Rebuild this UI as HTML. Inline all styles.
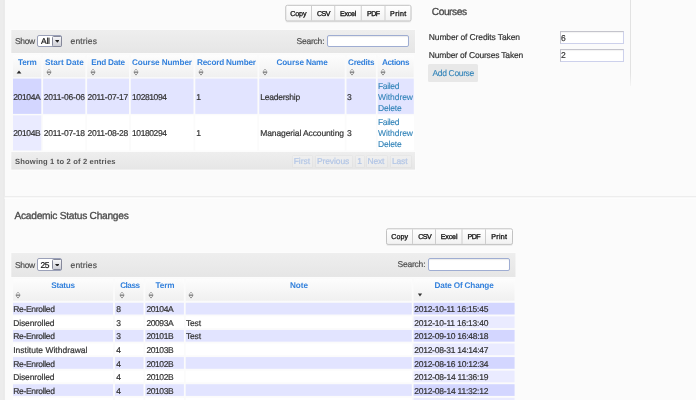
<!DOCTYPE html><html lang="en"><head><meta charset="utf-8"><title>Student Record</title><style>
html,body{margin:0;padding:0}body{width:696px;height:400px;overflow:hidden;position:relative;background:#fbfbfb;font-family:"Liberation Sans",sans-serif;color:#333;text-rendering:geometricPrecision;-webkit-font-smoothing:antialiased}
.b{display:inline-block;width:0;height:0}.r{position:absolute}.t{position:absolute;white-space:nowrap;height:14px;line-height:14px;-webkit-text-stroke:0.2px}
#L{position:absolute;left:0;top:0;width:696px;height:400px;will-change:transform;transform:translateZ(0)}
</style></head><body><div id="L">
<svg class="r" style="left:0;top:0" width="696" height="400" viewBox="0 0 696 400"><defs><linearGradient id="gh" x1="0" y1="0" x2="0" y2="1"><stop offset="0" stop-color="#fdfdfd"/><stop offset="1" stop-color="#f0f0f0"/></linearGradient><linearGradient id="gt" x1="0" y1="0" x2="0" y2="1"><stop offset="0" stop-color="#eeeeee"/><stop offset="1" stop-color="#e6e6e6"/></linearGradient><linearGradient id="gb" x1="0" y1="0" x2="0" y2="1"><stop offset="0" stop-color="#ffffff"/><stop offset="1" stop-color="#f2f2f2"/></linearGradient></defs><rect x="0.00" y="0.00" width="4.50" height="400.00" fill="#ececec"/><rect x="3.70" y="0.00" width="0.90" height="400.00" fill="#e4e4e4"/><rect x="4.50" y="196.10" width="691.50" height="1.40" fill="#ebebeb"/><rect x="4.50" y="197.50" width="691.50" height="1.40" fill="#fdfdfd"/><rect x="10.30" y="29.00" width="405.70" height="25.00" fill="#fcfcfc"/><rect x="11.30" y="30.00" width="403.70" height="23.00" fill="url(#gt)"/><rect x="10.30" y="252.00" width="506.20" height="26.00" fill="#fcfcfc"/><rect x="11.30" y="253.00" width="504.20" height="24.00" fill="url(#gt)"/><rect x="13.00" y="55.30" width="28.30" height="21.90" fill="url(#gh)"/><rect x="43.10" y="55.30" width="42.20" height="21.90" fill="url(#gh)"/><rect x="87.10" y="55.30" width="41.90" height="21.90" fill="url(#gh)"/><rect x="130.80" y="55.30" width="62.70" height="21.90" fill="url(#gh)"/><rect x="195.30" y="55.30" width="62.10" height="21.90" fill="url(#gh)"/><rect x="259.20" y="55.30" width="85.50" height="21.90" fill="url(#gh)"/><rect x="346.50" y="55.30" width="29.40" height="21.90" fill="url(#gh)"/><rect x="377.70" y="55.30" width="36.10" height="21.90" fill="url(#gh)"/><rect x="13.00" y="78.60" width="28.30" height="35.30" fill="#d3d6ff"/><rect x="43.10" y="78.60" width="42.20" height="35.30" fill="#e2e4ff"/><rect x="87.10" y="78.60" width="41.90" height="35.30" fill="#e2e4ff"/><rect x="130.80" y="78.60" width="62.70" height="35.30" fill="#e2e4ff"/><rect x="195.30" y="78.60" width="62.10" height="35.30" fill="#e2e4ff"/><rect x="259.20" y="78.60" width="85.50" height="35.30" fill="#e2e4ff"/><rect x="346.50" y="78.60" width="29.40" height="35.30" fill="#e2e4ff"/><rect x="377.70" y="78.60" width="36.10" height="35.30" fill="#e2e4ff"/><rect x="13.00" y="115.30" width="28.30" height="35.20" fill="#eaebff"/><rect x="43.10" y="115.30" width="42.20" height="35.20" fill="#ffffff"/><rect x="87.10" y="115.30" width="41.90" height="35.20" fill="#ffffff"/><rect x="130.80" y="115.30" width="62.70" height="35.20" fill="#ffffff"/><rect x="195.30" y="115.30" width="62.10" height="35.20" fill="#ffffff"/><rect x="259.20" y="115.30" width="85.50" height="35.20" fill="#ffffff"/><rect x="346.50" y="115.30" width="29.40" height="35.20" fill="#ffffff"/><rect x="377.70" y="115.30" width="36.10" height="35.20" fill="#ffffff"/><rect x="10.30" y="151.00" width="405.70" height="19.60" fill="#fcfcfc"/><rect x="11.30" y="152.00" width="403.70" height="17.60" fill="url(#gt)"/><rect x="13.00" y="278.90" width="100.10" height="21.80" fill="url(#gh)"/><rect x="114.90" y="278.90" width="28.60" height="21.80" fill="url(#gh)"/><rect x="145.30" y="278.90" width="38.60" height="21.80" fill="url(#gh)"/><rect x="185.70" y="278.90" width="226.10" height="21.80" fill="url(#gh)"/><rect x="413.60" y="278.90" width="101.00" height="21.80" fill="url(#gh)"/><rect x="13.00" y="302.80" width="100.10" height="11.70" fill="#e2e4ff"/><rect x="114.90" y="302.80" width="28.60" height="11.70" fill="#e2e4ff"/><rect x="145.30" y="302.80" width="38.60" height="11.70" fill="#e2e4ff"/><rect x="185.70" y="302.80" width="226.10" height="11.70" fill="#e2e4ff"/><rect x="413.60" y="302.80" width="101.00" height="11.70" fill="#d3d6ff"/><rect x="13.00" y="316.37" width="100.10" height="11.70" fill="#ffffff"/><rect x="114.90" y="316.37" width="28.60" height="11.70" fill="#ffffff"/><rect x="145.30" y="316.37" width="38.60" height="11.70" fill="#ffffff"/><rect x="185.70" y="316.37" width="226.10" height="11.70" fill="#ffffff"/><rect x="413.60" y="316.37" width="101.00" height="11.70" fill="#eaebff"/><rect x="13.00" y="329.94" width="100.10" height="11.70" fill="#e2e4ff"/><rect x="114.90" y="329.94" width="28.60" height="11.70" fill="#e2e4ff"/><rect x="145.30" y="329.94" width="38.60" height="11.70" fill="#e2e4ff"/><rect x="185.70" y="329.94" width="226.10" height="11.70" fill="#e2e4ff"/><rect x="413.60" y="329.94" width="101.00" height="11.70" fill="#d3d6ff"/><rect x="13.00" y="343.51" width="100.10" height="11.70" fill="#ffffff"/><rect x="114.90" y="343.51" width="28.60" height="11.70" fill="#ffffff"/><rect x="145.30" y="343.51" width="38.60" height="11.70" fill="#ffffff"/><rect x="185.70" y="343.51" width="226.10" height="11.70" fill="#ffffff"/><rect x="413.60" y="343.51" width="101.00" height="11.70" fill="#eaebff"/><rect x="13.00" y="357.08" width="100.10" height="11.70" fill="#e2e4ff"/><rect x="114.90" y="357.08" width="28.60" height="11.70" fill="#e2e4ff"/><rect x="145.30" y="357.08" width="38.60" height="11.70" fill="#e2e4ff"/><rect x="185.70" y="357.08" width="226.10" height="11.70" fill="#e2e4ff"/><rect x="413.60" y="357.08" width="101.00" height="11.70" fill="#d3d6ff"/><rect x="13.00" y="370.65" width="100.10" height="11.70" fill="#ffffff"/><rect x="114.90" y="370.65" width="28.60" height="11.70" fill="#ffffff"/><rect x="145.30" y="370.65" width="38.60" height="11.70" fill="#ffffff"/><rect x="185.70" y="370.65" width="226.10" height="11.70" fill="#ffffff"/><rect x="413.60" y="370.65" width="101.00" height="11.70" fill="#eaebff"/><rect x="13.00" y="384.22" width="100.10" height="11.70" fill="#e2e4ff"/><rect x="114.90" y="384.22" width="28.60" height="11.70" fill="#e2e4ff"/><rect x="145.30" y="384.22" width="38.60" height="11.70" fill="#e2e4ff"/><rect x="185.70" y="384.22" width="226.10" height="11.70" fill="#e2e4ff"/><rect x="413.60" y="384.22" width="101.00" height="11.70" fill="#d3d6ff"/><rect x="13.00" y="397.79" width="100.10" height="2.21" fill="#ffffff"/><rect x="114.90" y="397.79" width="28.60" height="2.21" fill="#ffffff"/><rect x="145.30" y="397.79" width="38.60" height="2.21" fill="#ffffff"/><rect x="185.70" y="397.79" width="226.10" height="2.21" fill="#ffffff"/><rect x="413.60" y="397.79" width="101.00" height="2.21" fill="#eaebff"/><rect x="285.55" y="5.80" width="125.65" height="16.70" rx="1.6" fill="#ececec"/><rect x="285.75" y="5.30" width="125.25" height="15.70" rx="1.6" fill="url(#gb)" stroke="#c2c2c2" stroke-width="1"/><rect x="311.00" y="5.80" width="1" height="14.70" fill="#cdcdcd"/><rect x="334.25" y="5.80" width="1" height="14.70" fill="#cdcdcd"/><rect x="360.75" y="5.80" width="1" height="14.70" fill="#cdcdcd"/><rect x="384.50" y="5.80" width="1" height="14.70" fill="#cdcdcd"/><rect x="386.30" y="229.30" width="126.40" height="16.60" rx="1.6" fill="#ececec"/><rect x="386.50" y="228.80" width="126.00" height="15.60" rx="1.6" fill="url(#gb)" stroke="#c2c2c2" stroke-width="1"/><rect x="412.00" y="229.30" width="1" height="14.60" fill="#cdcdcd"/><rect x="435.00" y="229.30" width="1" height="14.60" fill="#cdcdcd"/><rect x="461.50" y="229.30" width="1" height="14.60" fill="#cdcdcd"/><rect x="485.00" y="229.30" width="1" height="14.60" fill="#cdcdcd"/></svg>
<div class="r" style="left:629.80px;top:0.00px;width:1.00px;height:86.00px;background:linear-gradient(#e2e2e2 0,#e2e2e2 85%,#f4f4f4 100%)"></div>
<div class="r" style="left:37.40px;top:34.90px;width:25.10px;height:12.20px;background:#fff;border:1px solid #9aa0b8;border-radius:2px;box-sizing:border-box"></div>
<div class="r" style="left:52.40px;top:35.50px;width:9.60px;height:11.10px;background:linear-gradient(#f6f6f8,#cdced6);border:1px solid #85889a;border-radius:1.5px;box-sizing:border-box"></div>
<div class="r" style="left:327.00px;top:34.70px;width:82.00px;height:12.50px;background:#fff;border:1px solid #9fadd2;border-radius:2px;box-sizing:border-box;box-shadow:inset 0 1px 1px rgba(0,0,0,.08)"></div>
<div class="r" style="left:37.40px;top:258.40px;width:25.10px;height:12.20px;background:#fff;border:1px solid #9aa0b8;border-radius:2px;box-sizing:border-box"></div>
<div class="r" style="left:52.40px;top:259.00px;width:9.60px;height:11.10px;background:linear-gradient(#f6f6f8,#cdced6);border:1px solid #85889a;border-radius:1.5px;box-sizing:border-box"></div>
<div class="r" style="left:427.50px;top:258.20px;width:82.00px;height:12.50px;background:#fff;border:1px solid #9fadd2;border-radius:2px;box-sizing:border-box;box-shadow:inset 0 1px 1px rgba(0,0,0,.08)"></div>
<div class="r" style="left:291.50px;top:155.00px;width:21.50px;height:12.50px;background:rgba(255,255,255,.18);border:1px solid rgba(0,0,0,.035);box-sizing:border-box;border-radius:1.5px"></div>
<div class="r" style="left:314.50px;top:155.00px;width:38.50px;height:12.50px;background:rgba(255,255,255,.18);border:1px solid rgba(0,0,0,.035);box-sizing:border-box;border-radius:1.5px"></div>
<div class="r" style="left:354.50px;top:155.00px;width:10.00px;height:12.50px;background:rgba(255,255,255,.18);border:1px solid rgba(0,0,0,.035);box-sizing:border-box;border-radius:1.5px"></div>
<div class="r" style="left:366.00px;top:155.00px;width:22.00px;height:12.50px;background:rgba(255,255,255,.18);border:1px solid rgba(0,0,0,.035);box-sizing:border-box;border-radius:1.5px"></div>
<div class="r" style="left:389.50px;top:155.00px;width:22.00px;height:12.50px;background:rgba(255,255,255,.18);border:1px solid rgba(0,0,0,.035);box-sizing:border-box;border-radius:1.5px"></div>
<div class="r" style="left:559.60px;top:31.30px;width:64.90px;height:12.50px;background:#fff;border:1px solid;border-color:#c4c4cc #cdd1ec #cdd1ec #c4c4cc;box-sizing:border-box;box-shadow:inset 0 1px 1px rgba(0,0,0,.05)"></div>
<div class="r" style="left:559.60px;top:48.60px;width:64.90px;height:13.20px;background:#fff;border:1px solid;border-color:#c4c4cc #cdd1ec #cdd1ec #c4c4cc;box-sizing:border-box;box-shadow:inset 0 1px 1px rgba(0,0,0,.05)"></div>
<div class="r" style="left:428.25px;top:63.75px;width:50.00px;height:18.00px;background:#e8e8e8;border-radius:1.5px"></div>
<svg style="position:absolute;left:54.6px;top:40.099999999999994px" width="4.6" height="2.8" viewBox="0 0 46 28"><path d="M0 0H46L23 28Z" fill="#222"/></svg>
<svg style="position:absolute;left:54.6px;top:263.6px" width="4.6" height="2.8" viewBox="0 0 46 28"><path d="M0 0H46L23 28Z" fill="#222"/></svg>
<svg style="position:absolute;left:15.50px;top:70.00px" width="6" height="4" viewBox="0 0 60 40"><path d="M30 4L54 36H6Z" fill="#262626"/></svg>
<svg style="position:absolute;left:45.55px;top:67.70px" width="6" height="8" viewBox="0 0 60 80"><path d="M30 10L50 36H10Z" fill="#ffffff" stroke="#4a4a4a" stroke-width="4.2" stroke-linejoin="miter"/><path d="M30 71L50 45H10Z" fill="#ffffff" stroke="#1c1c1c" stroke-width="4.6" stroke-linejoin="miter"/></svg>
<svg style="position:absolute;left:89.80px;top:67.70px" width="6" height="8" viewBox="0 0 60 80"><path d="M30 10L50 36H10Z" fill="#ffffff" stroke="#4a4a4a" stroke-width="4.2" stroke-linejoin="miter"/><path d="M30 71L50 45H10Z" fill="#ffffff" stroke="#1c1c1c" stroke-width="4.6" stroke-linejoin="miter"/></svg>
<svg style="position:absolute;left:133.30px;top:67.70px" width="6" height="8" viewBox="0 0 60 80"><path d="M30 10L50 36H10Z" fill="#ffffff" stroke="#4a4a4a" stroke-width="4.2" stroke-linejoin="miter"/><path d="M30 71L50 45H10Z" fill="#ffffff" stroke="#1c1c1c" stroke-width="4.6" stroke-linejoin="miter"/></svg>
<svg style="position:absolute;left:197.80px;top:67.70px" width="6" height="8" viewBox="0 0 60 80"><path d="M30 10L50 36H10Z" fill="#ffffff" stroke="#4a4a4a" stroke-width="4.2" stroke-linejoin="miter"/><path d="M30 71L50 45H10Z" fill="#ffffff" stroke="#1c1c1c" stroke-width="4.6" stroke-linejoin="miter"/></svg>
<svg style="position:absolute;left:262.05px;top:67.70px" width="6" height="8" viewBox="0 0 60 80"><path d="M30 10L50 36H10Z" fill="#ffffff" stroke="#4a4a4a" stroke-width="4.2" stroke-linejoin="miter"/><path d="M30 71L50 45H10Z" fill="#ffffff" stroke="#1c1c1c" stroke-width="4.6" stroke-linejoin="miter"/></svg>
<svg style="position:absolute;left:348.80px;top:67.70px" width="6" height="8" viewBox="0 0 60 80"><path d="M30 10L50 36H10Z" fill="#ffffff" stroke="#4a4a4a" stroke-width="4.2" stroke-linejoin="miter"/><path d="M30 71L50 45H10Z" fill="#ffffff" stroke="#1c1c1c" stroke-width="4.6" stroke-linejoin="miter"/></svg>
<svg style="position:absolute;left:380.05px;top:67.70px" width="6" height="8" viewBox="0 0 60 80"><path d="M30 10L50 36H10Z" fill="#ffffff" stroke="#4a4a4a" stroke-width="4.2" stroke-linejoin="miter"/><path d="M30 71L50 45H10Z" fill="#ffffff" stroke="#1c1c1c" stroke-width="4.6" stroke-linejoin="miter"/></svg>
<svg style="position:absolute;left:14.80px;top:290.70px" width="6" height="8" viewBox="0 0 60 80"><path d="M30 10L50 36H10Z" fill="#ffffff" stroke="#4a4a4a" stroke-width="4.2" stroke-linejoin="miter"/><path d="M30 71L50 45H10Z" fill="#ffffff" stroke="#1c1c1c" stroke-width="4.6" stroke-linejoin="miter"/></svg>
<svg style="position:absolute;left:118.55px;top:290.70px" width="6" height="8" viewBox="0 0 60 80"><path d="M30 10L50 36H10Z" fill="#ffffff" stroke="#4a4a4a" stroke-width="4.2" stroke-linejoin="miter"/><path d="M30 71L50 45H10Z" fill="#ffffff" stroke="#1c1c1c" stroke-width="4.6" stroke-linejoin="miter"/></svg>
<svg style="position:absolute;left:148.05px;top:290.70px" width="6" height="8" viewBox="0 0 60 80"><path d="M30 10L50 36H10Z" fill="#ffffff" stroke="#4a4a4a" stroke-width="4.2" stroke-linejoin="miter"/><path d="M30 71L50 45H10Z" fill="#ffffff" stroke="#1c1c1c" stroke-width="4.6" stroke-linejoin="miter"/></svg>
<svg style="position:absolute;left:188.30px;top:290.70px" width="6" height="8" viewBox="0 0 60 80"><path d="M30 10L50 36H10Z" fill="#ffffff" stroke="#4a4a4a" stroke-width="4.2" stroke-linejoin="miter"/><path d="M30 71L50 45H10Z" fill="#ffffff" stroke="#1c1c1c" stroke-width="4.6" stroke-linejoin="miter"/></svg>
<svg style="position:absolute;left:416.70px;top:293.30px" width="6" height="4" viewBox="0 0 60 40"><path d="M9 6H51L30 34Z" fill="#333"/></svg>
<span class="t" id="t0" style="left:290.25px;top:7.00px;font-size:7.1px;color:#111;letter-spacing:-0.104px;-webkit-text-stroke:0.3px #111;">Copy</span>
<span class="t" id="t1" style="left:317.00px;top:7.00px;font-size:7.1px;color:#111;letter-spacing:-0.550px;-webkit-text-stroke:0.3px #111;">CSV</span>
<span class="t" id="t2" style="left:340.00px;top:7.00px;font-size:7.1px;color:#111;letter-spacing:-0.277px;-webkit-text-stroke:0.3px #111;">Excel</span>
<span class="t" id="t3" style="left:367.00px;top:7.00px;font-size:7.1px;color:#111;letter-spacing:-0.550px;-webkit-text-stroke:0.3px #111;">PDF</span>
<span class="t" id="t4" style="left:390.00px;top:7.00px;font-size:7.1px;color:#111;letter-spacing:0.414px;-webkit-text-stroke:0.3px #111;">Print</span>
<span class="t" id="t5" style="left:391.25px;top:230.00px;font-size:7.1px;color:#111;letter-spacing:0.062px;-webkit-text-stroke:0.3px #111;">Copy</span>
<span class="t" id="t6" style="left:418.25px;top:230.00px;font-size:7.1px;color:#111;letter-spacing:-0.550px;-webkit-text-stroke:0.3px #111;">CSV</span>
<span class="t" id="t7" style="left:440.75px;top:230.00px;font-size:7.1px;color:#111;letter-spacing:-0.152px;-webkit-text-stroke:0.3px #111;">Excel</span>
<span class="t" id="t8" style="left:467.50px;top:230.00px;font-size:7.1px;color:#111;letter-spacing:-0.550px;-webkit-text-stroke:0.3px #111;">PDF</span>
<span class="t" id="t9" style="left:491.25px;top:230.00px;font-size:7.1px;color:#111;letter-spacing:0.289px;-webkit-text-stroke:0.3px #111;">Print</span>
<span class="t" id="t10" style="left:15.00px;top:34.00px;font-size:8.5px;color:#505050;letter-spacing:-0.355px;">Show</span>
<span class="t" id="t11" style="left:41.00px;top:34.00px;font-size:8.5px;color:#111;letter-spacing:-0.227px;">All</span>
<span class="t" id="t12" style="left:70.50px;top:34.00px;font-size:8.5px;color:#505050;letter-spacing:0.164px;">entries</span>
<span class="t" id="t13" style="left:296.50px;top:34.00px;font-size:8.5px;color:#505050;letter-spacing:-0.216px;">Search:</span>
<span class="t" id="t14" style="left:15.00px;top:258.00px;font-size:8.5px;color:#505050;letter-spacing:-0.355px;">Show</span>
<span class="t" id="t15" style="left:40.50px;top:258.00px;font-size:8.5px;color:#111;letter-spacing:-0.550px;">25</span>
<span class="t" id="t16" style="left:70.50px;top:258.00px;font-size:8.5px;color:#505050;letter-spacing:0.164px;">entries</span>
<span class="t" id="t17" style="left:397.50px;top:257.00px;font-size:8.5px;color:#505050;letter-spacing:-0.216px;">Search:</span>
<span class="t" id="t18" style="left:18.00px;top:56.00px;font-size:8.2px;color:#3582dc;font-weight:700;letter-spacing:-0.224px;-webkit-text-stroke:0;">Term</span>
<span class="t" id="t19" style="left:45.00px;top:56.00px;font-size:8.2px;color:#3582dc;font-weight:700;letter-spacing:0.007px;-webkit-text-stroke:0;">Start Date</span>
<span class="t" id="t20" style="left:91.25px;top:56.00px;font-size:8.2px;color:#3582dc;font-weight:700;letter-spacing:-0.250px;-webkit-text-stroke:0;">End Date</span>
<span class="t" id="t21" style="left:132.00px;top:56.00px;font-size:8.2px;color:#3582dc;font-weight:700;letter-spacing:-0.118px;-webkit-text-stroke:0;">Course Number</span>
<span class="t" id="t22" style="left:197.00px;top:56.00px;font-size:8.2px;color:#3582dc;font-weight:700;letter-spacing:-0.202px;-webkit-text-stroke:0;">Record Number</span>
<span class="t" id="t23" style="left:276.50px;top:56.00px;font-size:8.2px;color:#3582dc;font-weight:700;letter-spacing:-0.155px;-webkit-text-stroke:0;">Course Name</span>
<span class="t" id="t24" style="left:348.00px;top:56.00px;font-size:8.2px;color:#3582dc;font-weight:700;letter-spacing:-0.286px;-webkit-text-stroke:0;">Credits</span>
<span class="t" id="t25" style="left:382.00px;top:56.00px;font-size:8.2px;color:#3582dc;font-weight:700;letter-spacing:-0.422px;-webkit-text-stroke:0;">Actions</span>
<span class="t" id="t26" style="left:13.20px;top:90.00px;font-size:8.5px;color:#333;letter-spacing:-0.352px;">20104A</span>
<span class="t" id="t27" style="left:43.75px;top:90.00px;font-size:8.5px;color:#333;letter-spacing:-0.179px;">2011-06-06</span>
<span class="t" id="t28" style="left:87.50px;top:90.00px;font-size:8.5px;color:#333;letter-spacing:-0.234px;">2011-07-17</span>
<span class="t" id="t29" style="left:132.00px;top:90.00px;font-size:8.5px;color:#333;letter-spacing:-0.404px;">10281094</span>
<span class="t" id="t30" style="left:196.20px;top:90.00px;font-size:8.5px;color:#333;">1</span>
<span class="t" id="t31" style="left:260.25px;top:90.00px;font-size:8.5px;color:#333;letter-spacing:-0.229px;">Leadership</span>
<span class="t" id="t32" style="left:347.00px;top:90.00px;font-size:8.5px;color:#333;">3</span>
<span class="t" id="t33" style="left:13.20px;top:126.00px;font-size:8.5px;color:#333;letter-spacing:-0.352px;">20104B</span>
<span class="t" id="t34" style="left:43.75px;top:126.00px;font-size:8.5px;color:#333;letter-spacing:-0.179px;">2011-07-18</span>
<span class="t" id="t35" style="left:87.50px;top:126.00px;font-size:8.5px;color:#333;letter-spacing:-0.234px;">2011-08-28</span>
<span class="t" id="t36" style="left:132.00px;top:126.00px;font-size:8.5px;color:#333;letter-spacing:-0.404px;">10180294</span>
<span class="t" id="t37" style="left:196.20px;top:126.00px;font-size:8.5px;color:#333;">1</span>
<span class="t" id="t38" style="left:260.25px;top:126.00px;font-size:8.5px;color:#333;letter-spacing:-0.113px;">Managerial Accounting</span>
<span class="t" id="t39" style="left:347.00px;top:126.00px;font-size:8.5px;color:#333;">3</span>
<span class="t" id="t40" style="left:378.00px;top:79.00px;font-size:8.5px;color:#3183b8;letter-spacing:-0.331px;-webkit-text-stroke:0.1px;">Failed</span>
<span class="t" id="t41" style="left:378.00px;top:90.00px;font-size:8.5px;color:#3183b8;letter-spacing:-0.062px;-webkit-text-stroke:0.1px;">Withdrew</span>
<span class="t" id="t42" style="left:378.00px;top:101.00px;font-size:8.5px;color:#3183b8;letter-spacing:-0.166px;-webkit-text-stroke:0.1px;">Delete</span>
<span class="t" id="t43" style="left:378.00px;top:115.00px;font-size:8.5px;color:#3183b8;letter-spacing:-0.331px;-webkit-text-stroke:0.1px;">Failed</span>
<span class="t" id="t44" style="left:378.00px;top:126.00px;font-size:8.5px;color:#3183b8;letter-spacing:-0.062px;-webkit-text-stroke:0.1px;">Withdrew</span>
<span class="t" id="t45" style="left:378.00px;top:137.00px;font-size:8.5px;color:#3183b8;letter-spacing:-0.166px;-webkit-text-stroke:0.1px;">Delete</span>
<span class="t" id="t46" style="left:15.00px;top:155.00px;font-size:7.6px;color:#555;font-weight:700;letter-spacing:0.165px;-webkit-text-stroke:0;">Showing 1 to 2 of 2 entries</span>
<span class="t" id="t47" style="left:293.75px;top:154.00px;font-size:8.5px;color:#b3c6e6;letter-spacing:-0.070px;">First</span>
<span class="t" id="t48" style="left:317.00px;top:154.00px;font-size:8.5px;color:#b3c6e6;letter-spacing:-0.118px;">Previous</span>
<span class="t" id="t49" style="left:357.20px;top:154.00px;font-size:8.5px;color:#b3c6e6;">1</span>
<span class="t" id="t50" style="left:367.50px;top:154.00px;font-size:8.5px;color:#b3c6e6;letter-spacing:-0.245px;">Next</span>
<span class="t" id="t51" style="left:392.00px;top:154.00px;font-size:8.5px;color:#b3c6e6;letter-spacing:-0.193px;">Last</span>
<span class="t" id="t52" style="left:431.75px;top:6.00px;font-size:10.2px;color:#4a4a4a;letter-spacing:-0.448px;-webkit-text-stroke:0.3px;">Courses</span>
<span class="t" id="t53" style="left:428.75px;top:30.00px;font-size:8.5px;color:#333;letter-spacing:-0.119px;">Number of Credits Taken</span>
<span class="t" id="t54" style="left:428.75px;top:48.00px;font-size:8.5px;color:#333;letter-spacing:-0.186px;">Number of Courses Taken</span>
<span class="t" id="t55" style="left:561.00px;top:31.00px;font-size:8.5px;color:#333;">6</span>
<span class="t" id="t56" style="left:561.00px;top:48.00px;font-size:8.5px;color:#333;">2</span>
<span class="t" id="t57" style="left:432.50px;top:66.00px;font-size:8.5px;color:#3183b8;letter-spacing:-0.349px;-webkit-text-stroke:0.1px;">Add Course</span>
<span class="t" id="t58" style="left:14.50px;top:210.00px;font-size:10.2px;color:#4a4a4a;letter-spacing:-0.264px;-webkit-text-stroke:0.3px;">Academic Status Changes</span>
<span class="t" id="t59" style="left:51.25px;top:279.00px;font-size:8.2px;color:#3582dc;font-weight:700;letter-spacing:-0.256px;-webkit-text-stroke:0;">Status</span>
<span class="t" id="t60" style="left:120.20px;top:279.00px;font-size:8.2px;color:#3582dc;font-weight:700;letter-spacing:-0.515px;-webkit-text-stroke:0;">Class</span>
<span class="t" id="t61" style="left:155.50px;top:279.00px;font-size:8.2px;color:#3582dc;font-weight:700;letter-spacing:-0.141px;-webkit-text-stroke:0;">Term</span>
<span class="t" id="t62" style="left:290.00px;top:279.00px;font-size:8.2px;color:#3582dc;font-weight:700;letter-spacing:-0.068px;-webkit-text-stroke:0;">Note</span>
<span class="t" id="t63" style="left:434.50px;top:279.00px;font-size:8.2px;color:#3582dc;font-weight:700;letter-spacing:-0.167px;-webkit-text-stroke:0;">Date Of Change</span>
<span class="t" id="t64" style="left:13.20px;top:302.00px;font-size:8.5px;color:#333;letter-spacing:-0.309px;">Re-Enrolled</span>
<span class="t" id="t65" style="left:116.25px;top:302.00px;font-size:8.5px;color:#333;">8</span>
<span class="t" id="t66" style="left:146.50px;top:302.00px;font-size:8.5px;color:#333;letter-spacing:-0.443px;">20104A</span>
<span class="t" id="t67" style="left:414.25px;top:302.00px;font-size:8.5px;color:#333;letter-spacing:-0.226px;">2012-10-11 16:15:45</span>
<span class="t" id="t68" style="left:13.20px;top:316.00px;font-size:8.5px;color:#333;letter-spacing:-0.123px;">Disenrolled</span>
<span class="t" id="t69" style="left:116.25px;top:316.00px;font-size:8.5px;color:#333;">3</span>
<span class="t" id="t70" style="left:146.50px;top:316.00px;font-size:8.5px;color:#333;letter-spacing:-0.443px;">20093A</span>
<span class="t" id="t71" style="left:186.00px;top:316.00px;font-size:8.5px;color:#333;letter-spacing:-0.198px;">Test</span>
<span class="t" id="t72" style="left:414.25px;top:316.00px;font-size:8.5px;color:#333;letter-spacing:-0.226px;">2012-10-11 16:13:40</span>
<span class="t" id="t73" style="left:13.20px;top:329.00px;font-size:8.5px;color:#333;letter-spacing:-0.309px;">Re-Enrolled</span>
<span class="t" id="t74" style="left:116.25px;top:329.00px;font-size:8.5px;color:#333;">3</span>
<span class="t" id="t75" style="left:146.50px;top:329.00px;font-size:8.5px;color:#333;letter-spacing:-0.443px;">20101B</span>
<span class="t" id="t76" style="left:186.00px;top:329.00px;font-size:8.5px;color:#333;letter-spacing:-0.198px;">Test</span>
<span class="t" id="t77" style="left:414.25px;top:329.00px;font-size:8.5px;color:#333;letter-spacing:-0.260px;">2012-09-10 16:48:18</span>
<span class="t" id="t78" style="left:13.20px;top:343.00px;font-size:8.5px;color:#333;letter-spacing:0.007px;">Institute Withdrawal</span>
<span class="t" id="t79" style="left:116.25px;top:343.00px;font-size:8.5px;color:#333;">4</span>
<span class="t" id="t80" style="left:146.50px;top:343.00px;font-size:8.5px;color:#333;letter-spacing:-0.443px;">20103B</span>
<span class="t" id="t81" style="left:414.25px;top:343.00px;font-size:8.5px;color:#333;letter-spacing:-0.260px;">2012-08-31 14:14:47</span>
<span class="t" id="t82" style="left:13.20px;top:357.00px;font-size:8.5px;color:#333;letter-spacing:-0.309px;">Re-Enrolled</span>
<span class="t" id="t83" style="left:116.25px;top:357.00px;font-size:8.5px;color:#333;">4</span>
<span class="t" id="t84" style="left:146.50px;top:357.00px;font-size:8.5px;color:#333;letter-spacing:-0.443px;">20102B</span>
<span class="t" id="t85" style="left:414.25px;top:357.00px;font-size:8.5px;color:#333;letter-spacing:-0.260px;">2012-08-16 10:12:34</span>
<span class="t" id="t86" style="left:13.20px;top:370.00px;font-size:8.5px;color:#333;letter-spacing:-0.123px;">Disenrolled</span>
<span class="t" id="t87" style="left:116.25px;top:370.00px;font-size:8.5px;color:#333;">4</span>
<span class="t" id="t88" style="left:146.50px;top:370.00px;font-size:8.5px;color:#333;letter-spacing:-0.443px;">20102B</span>
<span class="t" id="t89" style="left:414.25px;top:370.00px;font-size:8.5px;color:#333;letter-spacing:-0.226px;">2012-08-14 11:36:19</span>
<span class="t" id="t90" style="left:13.20px;top:384.00px;font-size:8.5px;color:#333;letter-spacing:-0.309px;">Re-Enrolled</span>
<span class="t" id="t91" style="left:116.25px;top:384.00px;font-size:8.5px;color:#333;">4</span>
<span class="t" id="t92" style="left:146.50px;top:384.00px;font-size:8.5px;color:#333;letter-spacing:-0.443px;">20103B</span>
<span class="t" id="t93" style="left:414.25px;top:384.00px;font-size:8.5px;color:#333;letter-spacing:-0.226px;">2012-08-14 11:32:12</span>
</div></body></html>
